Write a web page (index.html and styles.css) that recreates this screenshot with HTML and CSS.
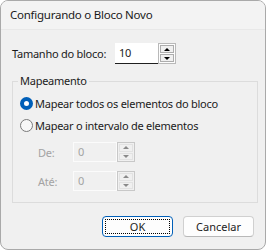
FILE: index.html
```html
<!DOCTYPE html>
<html>
<head>
<meta charset="utf-8">
<link rel="stylesheet" href="styles.css">
</head>
<body>
<div class="window">
  <div class="titlebar">Configurando o Bloco Novo</div>
  <div class="content">
    <div class="row-size">
      <span class="label">Tamanho do bloco:</span>
      <div class="spin">
        <div class="spin-field">10</div>
        <div class="spin-btns">
          <div class="sbtn"><span class="arr up"></span></div>
          <div class="sbtn"><span class="arr down"></span></div>
        </div>
      </div>
    </div>
    <fieldset class="group">
      <legend>Mapeamento</legend>
      <div class="radio-row"><span class="radio checked"></span><span>Mapear todos os elementos do bloco</span></div>
      <div class="radio-row"><span class="radio"></span><span>Mapear o intervalo de elementos</span></div>
      <div class="range-row first">
        <span class="dlabel">De:</span>
        <div class="spin disabled">
          <div class="spin-field">0</div>
          <div class="spin-btns">
            <div class="sbtn"><span class="arr up"></span></div>
            <div class="sbtn"><span class="arr down"></span></div>
          </div>
        </div>
      </div>
      <div class="range-row">
        <span class="dlabel">Até:</span>
        <div class="spin disabled">
          <div class="spin-field">0</div>
          <div class="spin-btns">
            <div class="sbtn"><span class="arr up"></span></div>
            <div class="sbtn"><span class="arr down"></span></div>
          </div>
        </div>
      </div>
    </fieldset>
    <div class="buttons">
      <button class="btn default"><span class="focus">OK</span></button>
      <button class="btn">Cancelar</button>
    </div>
  </div>
</div>
</body>
</html>
```

FILE: styles.css
```css
html, body {
  margin: 0;
  padding: 0;
  background: #ffffff;
}
body {
  font-family: "Noto Sans", "Open Sans", sans-serif;
  font-size: 11px;
  letter-spacing: -0.25px;
  color: #1b1b1b;
}
.window {
  box-sizing: border-box;
  width: 266px;
  height: 250px;
  border: 1px solid #a9a9a9;
  border-radius: 8px;
  background: #f0f0f0;
  overflow: hidden;
  display: flex;
  flex-direction: column;
}
.titlebar {
  height: 28px;
  padding-left: 9px;
  line-height: 28px;
  font-size: 11.5px;
  background: #f3f3f3;
  border-bottom: 1px solid #e8e8e8;
  color: #1a1a1a;
}
.content {
  padding: 13px 0 0 11px;
  display: flex;
  flex-direction: column;
}
.row-size {
  display: flex;
  align-items: center;
  height: 21px;
}
.label {
  width: 103px;
}
.spin {
  display: flex;
  height: 21px;
}
.spin-field {
  box-sizing: border-box;
  width: 43px;
  height: 21px;
  background: #ffffff;
  border-bottom: 1px solid #1f1f1f;
  padding-left: 4px;
  line-height: 20px;
}
.spin-btns {
  box-sizing: border-box;
  width: 18px;
  height: 21px;
  border: 1px solid #b9b9b9;
  display: flex;
  flex-direction: column;
  gap: 1px;
  padding: 1px;
  background: #fdfdfd;
}
.sbtn {
  flex: 1;
  border: 1px solid #adadad;
  background: #f0f0f0;
  display: flex;
  align-items: center;
  justify-content: center;
}
.arr {
  width: 0;
  height: 0;
  border-left: 3px solid transparent;
  border-right: 3px solid transparent;
}
.arr.up { border-bottom: 3px solid #000; }
.arr.down { border-top: 3px solid #000; }
.group {
  box-sizing: border-box;
  width: 246px;
  height: 129px;
  margin: 10px 0 0 0;
  padding: 4px 0 0 7px;
  border: 1px solid #dcdcdc;
}
.group legend {
  padding: 0 2px;
  margin-left: -2px;
  line-height: 14px;
}
.radio-row {
  display: flex;
  align-items: center;
  height: 22px;
  gap: 2px;
}
.radio {
  box-sizing: border-box;
  width: 13px;
  height: 13px;
  border-radius: 50%;
  border: 1px solid #7a7a7a;
  background: #f7f7f7;
}
.radio.checked {
  border: 4px solid #005fb8;
  background: #ffffff;
}
.range-row {
  display: flex;
  align-items: center;
  height: 29px;
}
.range-row.first { margin-top: 2px; }
.dlabel {
  width: 35px;
  padding-left: 18px;
  color: #a3a3a3;
}
.spin.disabled .spin-field {
  width: 44px;
  height: 20px;
  background: #f0f0f0;
  border: 1px solid #fbfbfb;
  color: #a3a3a3;
  line-height: 18px;
}
.spin.disabled .spin-btns {
  height: 20px;
  border-color: #c8c8c8;
  background: #f0f0f0;
}
.spin.disabled .sbtn {
  border-color: #e2e2e2;
}
.spin.disabled .arr.up { border-bottom-color: #8a8a8a; }
.spin.disabled .arr.down { border-top-color: #8a8a8a; }
.buttons {
  display: flex;
  gap: 10px;
  margin: 13px 0 0 90px;
}
.btn {
  box-sizing: border-box;
  width: 71px;
  height: 21px;
  font: inherit;
  color: #1b1b1b;
  background: #fdfdfd;
  border: 1px solid #d0d0d0;
  border-bottom-color: #b8b8b8;
  border-radius: 4px;
  padding: 0;
}
.btn.default {
  border: 1px solid #005fb8;
  padding: 2px;
  display: flex;
}
.focus {
  flex: 1;
  border: 1px dotted #000;
  display: flex;
  align-items: center;
  justify-content: center;
}
```
